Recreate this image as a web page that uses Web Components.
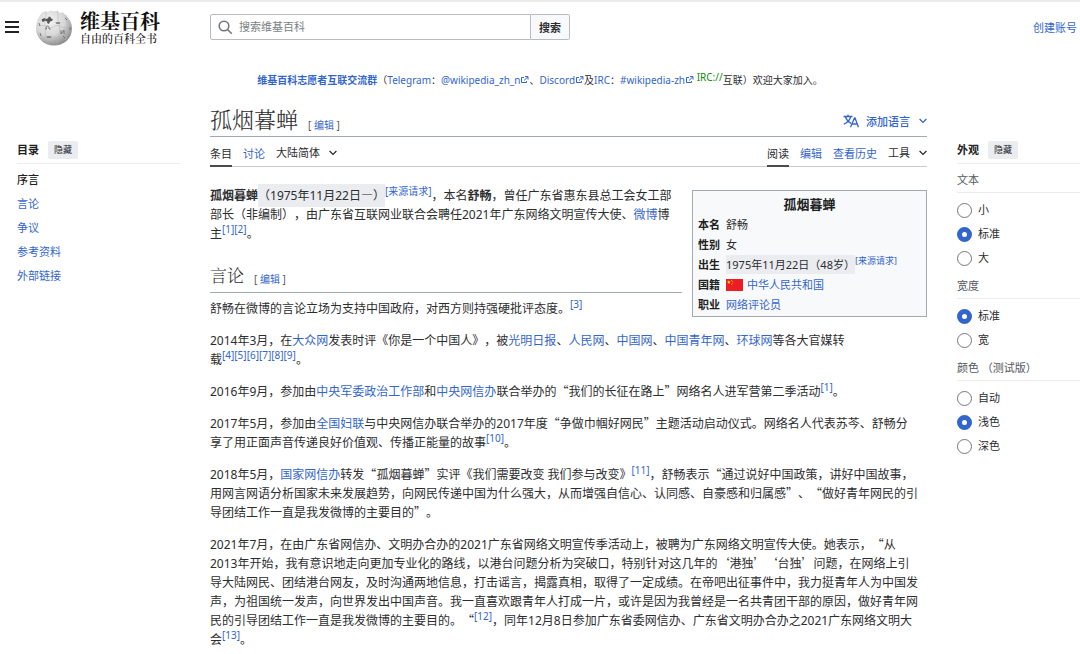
<!DOCTYPE html>
<html lang="zh-CN">
<head>
<meta charset="utf-8">
<meta name="viewport" content="width=device-width">
<title>孤烟暮蝉 - 维基百科</title>
<style>
html{background:#fff}
body{margin:0;border-top:2px solid #ebebeb;color:#2c2d2f;font:12px/19px "Noto Sans","Noto Sans CJK SC",sans-serif;text-spacing-trim:space-all;text-autospace:no-autospace;overflow-x:hidden}
</style>
</head>
<body>
<wiki-page>
  <wiki-header slot="header"></wiki-header>
  <site-notice slot="notice"></site-notice>
  <side-toc slot="left"></side-toc>
  <wiki-article></wiki-article>
  <appearance-panel slot="right">
    <radio-group heading="文本" options="小,标准,大" selected="标准"></radio-group>
    <radio-group heading="宽度" options="标准,宽" selected="标准"></radio-group>
    <radio-group heading="颜色 （测试版）" options="自动,浅色,深色" selected="浅色"></radio-group>
  </appearance-panel>
</wiki-page>
<script>
const base = `
*{box-sizing:border-box}
a{color:#3366cc;text-decoration:none}
button,input{font-family:inherit;color:inherit}
`;
function define(name, html) {
  customElements.define(name, class extends HTMLElement {
    constructor() {
      super();
      const t = document.createElement('template');
      t.innerHTML = html;
      const root = this.attachShadow({mode: 'open'});
      root.append(t.content.cloneNode(true));
    }
  });
}

define('wiki-page', `<style>${base}
:host{display:block}
.cols{display:grid;grid-template-columns:180px minmax(0,1fr) 123px;column-gap:30px}
.cols>*{min-width:0}
.side{padding-top:37px}
</style>
<slot name="header"></slot>
<slot name="notice"></slot>
<div class="cols">
  <div class="side"><slot name="left"></slot></div>
  <main><slot></slot></main>
  <div class="side"><slot name="right"></slot></div>
</div>`);

define('wiki-globe', `<style>:host{display:block;width:38px;height:37px}svg{display:block}</style>
<svg width="38" height="37" viewBox="0 0 38 37" aria-hidden="true">
  <defs><radialGradient id="g" cx=".38" cy=".3" r=".75"><stop offset="0" stop-color="#f4f4f4"/><stop offset=".55" stop-color="#d6d6d6"/><stop offset="1" stop-color="#858585"/></radialGradient></defs>
  <path d="M7 3.5l3.500-1.500 2.500 1 2-1.500 4 .8 3.500-.6 2 2 3.500-.2 3 3c3.800 3.500 6 8 6 13 0 10-8 17-18 17S1 29 1 19.500C1 13 3 8 7 3.500z" fill="url(#g)"/>
  <path d="M6.500 10.500l3-1.500 1.500 1 2-.8 1-1.700 1.500.5.500 1.500 2 .5-1 2-2 .5-1 2.500-2-1 .5-1.500-2.500-.5-2.500 1z" fill="#555"/>
  <g fill="none" stroke="#b4b4b4" stroke-width=".5"><path d="M2 16c3 2 5-1 8 1s5 3 8 1 6-2 9 0 6 0 10-1M6 30c3-3 5-1 8-2s6 2 9 0 6-1 9 1M11 3c1 5-2 8-1 13s-1 9 3 17M22 2c2 5 0 8 2 14s-1 10-2 20M32 6c-2 4 0 7 1 11s-1 9-3 14"/></g>
  <g fill="none" stroke="#666" stroke-width=".8"><path d="M10 20h1.500c-2-4 4-4 2.500 0h1.500M21 13l1 2 1-2 1 2 1-2M12 27l1 2 1-2 1 2 1-2M26 21v4l3-4v4M30 9l2 2M30 29l-2-2M4 14l1 3M5 24l1 3M35 18v3"/></g>
</svg>`);

define('wiki-header', `<style>${base}
:host{display:block;height:54px}
header{display:grid;grid-template-columns:210px minmax(0,360px) 1fr;align-items:center;height:50px}
.brand{display:flex;align-items:center;padding-left:5px}
.menu{border:0;background:none;padding:0;width:14px;height:16px;display:block}
.menu svg{display:block}
.logo{display:flex;align-items:center;margin-left:16px;gap:7px;color:#111}
.words{display:flex;flex-direction:column;font-family:"Noto Serif CJK SC","Noto Sans CJK SC",serif}
.name{font-size:20px;line-height:22px;font-weight:700}
.tag{font-size:11px;line-height:12px;font-weight:500}
form{display:flex;height:26px}
label{flex:1;display:flex;align-items:center;border:1px solid #b8bbc0;border-radius:2px 0 0 2px;padding-left:7px;gap:6px}
label svg{flex:none}
input{flex:1;min-width:0;border:0;padding:0;outline:0;background:none;font-size:11px;line-height:16px}
input::placeholder{color:#7c7f84;opacity:1}
form button{width:39px;border:1px solid #b8bbc0;border-left:0;border-radius:0 2px 2px 0;background:#f8f9fa;font-size:11px;font-weight:700;padding:0}
.acct{justify-self:end;padding-right:3px;font-size:11px}
</style>
<header>
  <div class="brand">
    <button class="menu" aria-label="主菜单"><svg width="14" height="16" viewBox="0 0 14 16"><path d="M0 3h14M0 8h14M0 13h14" stroke="#222" stroke-width="1.900"/></svg></button>
    <a class="logo" href="#"><wiki-globe></wiki-globe><span class="words"><span class="name">维基百科</span><span class="tag">自由的百科全书</span></span></a>
  </div>
  <form role="search">
    <label><svg width="15" height="15" viewBox="0 0 15 15" fill="none" stroke="#72777d" stroke-width="1.600" role="img" aria-label="搜索"><circle cx="6" cy="6" r="4.800"/><path d="M9.500 9.500l4.300 4.300"/></svg><input type="search" placeholder="搜索维基百科" aria-label="搜索维基百科"></label><button type="button">搜索</button>
  </form>
  <a class="acct" href="#">创建账号</a>
</header>`);

define('ext-icon', `<style>:host{display:inline-block;width:9px;height:8px}svg{display:block}</style>
<svg width="9" height="8" viewBox="0 0 9 8" fill="none" stroke="#3366cc" stroke-width="1"><path d="M4 1.500H1.500v5h5V5M5 .6h3v3M8 .6L4 4.500"/></svg>`);

define('site-notice', `<style>${base}
:host{display:block;font-size:10px;line-height:16px;text-align:center;padding:16px 0 0;height:30px;white-space:nowrap}
b a{font-weight:700}
.irc{color:#118a11;position:relative;top:-3px}
</style>
<b><a href="#">维基百科志愿者互联交流群</a></b>（<a href="#">Telegram</a>：<a href="#">@wikipedia_zh_n<ext-icon></ext-icon></a>、<a href="#">Discord<ext-icon></ext-icon></a>及<a href="#">IRC</a>：<a href="#">#wikipedia-zh<ext-icon></ext-icon></a> <span class="irc">IRC://</span>互联）欢迎大家加入。`);

define('panel-head', `<style>${base}
:host{display:flex;align-items:center;gap:9px;height:25px;border-bottom:1px solid #eaecf0;padding-bottom:3px;color:#202122}
b{font-size:11px;line-height:18px}
button{font-size:9px;line-height:18px;height:18px;width:30px;padding:0;border:0;border-radius:2px;background:#eaecf0}
</style><b><slot></slot></b><button>隐藏</button>`);

define('side-toc', `<style>${base}
:host{display:block;padding-left:17px;font-size:11px}
ul{list-style:none;margin:0;padding:4px 0 0}
li{height:24px;line-height:24px}
.on{color:#202122;font-weight:500}
</style>
<nav><panel-head>目录</panel-head>
<ul><li><a class="on" href="#">序言</a></li><li><a href="#">言论</a></li><li><a href="#">争议</a></li><li><a href="#">参考资料</a></li><li><a href="#">外部链接</a></li></ul></nav>`);

define('appearance-panel', `<style>${base}
:host{display:block}
.groups{display:flex;flex-direction:column;gap:4px;padding-top:4px}
</style><panel-head>外观</panel-head><div class="groups"><slot></slot></div>`);

customElements.define('radio-group', class extends HTMLElement {
  connectedCallback() {
    if (this.shadowRoot) return;
    const root = this.attachShadow({mode: 'open'});
    const sel = this.getAttribute('selected');
    root.innerHTML = `<style>${base}
    :host{display:block;font-size:11px}
    fieldset{border:0;margin:0;padding:0;min-width:0}
    legend{display:block;width:100%;padding:0;height:25px;line-height:24px;border-bottom:1px solid #eaecf0;color:#54595d;margin-bottom:5px}
    label{display:flex;align-items:center;gap:6px;height:24px;line-height:24px}
    input{appearance:none;width:15px;height:15px;margin:0;border:1px solid #72777d;border-radius:50%;background:#fff}
    input:checked{border:5px solid #3366cc}
    </style><fieldset><legend>${this.getAttribute('heading')}</legend>${this.getAttribute('options').split(',').map(o =>
      `<label><input type="radio" name="opt"${o === sel ? ' checked' : ''}>${o}</label>`).join('')}</fieldset>`;
  }
});

define('chevron-icon', `<style>:host{display:inline-block;width:8px;height:6px}svg{display:block}</style>
<svg width="8" height="6" viewBox="0 0 8 6" fill="none" stroke="currentColor" stroke-width="1.300"><path d="M.6 1L4 4.400 7.400 1"/></svg>`);

define('edit-link', `<style>${base}:host{display:inline-block;font:10px/14px "Noto Sans","Noto Sans CJK SC",sans-serif;color:#54595d;white-space:pre}</style>[ <a href="#">编辑</a> ]`);

define('page-tabs', `<style>${base}
:host{display:flex;justify-content:space-between;height:30px;border-bottom:1px solid #c8ccd1;font-size:11px;line-height:33px}
nav{display:flex;gap:11px}
a,button{height:30px;line-height:33px;display:block}
a.on{color:inherit;border-bottom:2px solid #4a4b4d}
button{display:flex;align-items:center;gap:9px;border:0;background:none;padding:0;font-size:11px}
chevron-icon{margin-top:2px}
</style>
<nav><a class="on" href="#">条目</a><a href="#">讨论</a><button>大陆简体<chevron-icon></chevron-icon></button></nav>
<nav><a class="on" href="#">阅读</a><a href="#">编辑</a><a href="#">查看历史</a><button>工具<chevron-icon></chevron-icon></button></nav>`);

define('cn-flag', `<style>:host{display:inline-block;width:17px;height:12px;vertical-align:-2px;margin-right:4px}svg{display:block}</style>
<svg width="17" height="12" viewBox="0 0 30 20" preserveAspectRatio="none"><path fill="#ee1c25" d="M0 0h30v20H0z"/><g fill="#ff0"><path d="M5 2l.9 2.100 2.100.2-1.600 1.500.5 2.200L5 6.800 3.100 8l.5-2.200L2 4.300l2.100-.2z"/><circle cx="10" cy="2" r=".8"/><circle cx="12" cy="4" r=".8"/><circle cx="12" cy="7" r=".8"/><circle cx="10" cy="9" r=".8"/></g></svg>`);

define('info-box', `<style>${base}
:host{display:block;float:right;width:235px;margin:4px 0 14px 10px;border:1px solid #a2a9b1;background:#f8f9fa;padding:1px 2px}
table{border-collapse:collapse;width:100%;font-size:11px;line-height:20px}
caption{font-size:13px;font-weight:700;line-height:22px;padding-top:1px;color:#202122}
th{width:29px;text-align:left;padding:0 0 0 3px;color:#202122}
td{padding:0 0 0 2px}
th,td{height:20px}
.hl{background:#eaecf0;padding:2px 0}
sup{font-size:9px;line-height:0}
</style>
<table><caption>孤烟暮蝉</caption>
<tr><th scope="row">本名</th><td>舒畅</td></tr>
<tr><th scope="row">性别</th><td>女</td></tr>
<tr><th scope="row">出生</th><td><span class="hl">1975年11月22日（48岁）</span><sup><a href="#">[来源请求]</a></sup></td></tr>
<tr><th scope="row">国籍</th><td><cn-flag></cn-flag><a href="#">中华人民共和国</a></td></tr>
<tr><th scope="row">职业</th><td><a href="#">网络评论员</a></td></tr></table>`);

/* .q: quotation marks take the full-width forms of the CJK face */
define('wiki-article', `<style>${base}
:host{display:block}
.title{display:flex;align-items:center;justify-content:space-between;height:35px;padding-top:4px;border-bottom:1px solid #a2a9b1}
h1,h2{margin:0;font-family:"Liberation Serif","Noto Serif CJK SC","Noto Sans CJK SC",serif;font-weight:300;display:flex;align-items:center;gap:10px}
h1{font-size:22px;line-height:30px}
h1 edit-link{margin-top:8px}
h2 edit-link{margin-top:4px}
h2{font-size:17px;line-height:26px;height:30px;padding-bottom:2px;border-bottom:1px solid #a2a9b1;margin-top:20px;overflow:hidden}
.lang{border:0;background:none;padding:0;display:flex;align-items:center;gap:7px;font-size:11px;font-weight:500;color:#3366cc}
.lang chevron-icon{margin-left:2px}
.body{padding-top:19px}
p{margin:0 0 13px;white-space:nowrap}
h2+p{margin-top:6px}
sup{font-size:10px;line-height:0}
.hl{background:#eaecf0;padding:3px 0}
.q{font-family:"Noto Sans CJK SC",sans-serif;font-style:normal;line-height:0}
</style>
<article>
<div class="title"><h1>孤烟暮蝉<edit-link></edit-link></h1>
<button class="lang"><svg width="16" height="14" viewBox="0 0 16 14" fill="none" stroke="currentColor" stroke-width="1.300" aria-hidden="true"><path d="M.5 2.500h9M5 .5v2M2.300 2.800C3.500 6 5.500 8.200 8.200 9.500M7.800 2.800C6.500 6.500 4 9 .8 10.200M7.500 13.300L11.500 4h.5l3.500 9.300M9 10h5.500"/></svg>添加语言<chevron-icon></chevron-icon></button></div>
<page-tabs></page-tabs>
<div class="body">
<info-box></info-box>
<p><b>孤烟暮蝉</b><span class="hl">（1975年11月22日<i class="q">—</i>）</span><sup><a href="#">[来源请求]</a></sup>，本名<b>舒畅</b>，曾任广东省惠东县总工会女工部<br>部长（非编制），由广东省互联网业联合会聘任2021年广东网络文明宣传大使、<a href="#">微博</a>博<br>主<sup><a href="#">[1]</a><a href="#">[2]</a></sup>。</p>
<h2>言论<edit-link></edit-link></h2>
<p>舒畅在微博的言论立场为支持中国政府，对西方则持强硬批评态度。<sup><a href="#">[3]</a></sup></p>
<p>2014年3月，在<a href="#">大众网</a>发表时评《你是一个中国人》，被<a href="#">光明日报</a>、<a href="#">人民网</a>、<a href="#">中国网</a>、<a href="#">中国青年网</a>、<a href="#">环球网</a>等各大官媒转<br>载<sup><a href="#">[4]</a><a href="#">[5]</a><a href="#">[6]</a><a href="#">[7]</a><a href="#">[8]</a><a href="#">[9]</a></sup>。</p>
<p>2016年9月，参加由<a href="#">中央军委政治工作部</a>和<a href="#">中央网信办</a>联合举办的<i class="q">“</i>我们的长征在路上<i class="q">”</i>网络名人进军营第二季活动<sup><a href="#">[1]</a></sup>。</p>
<p>2017年5月，参加由<a href="#">全国妇联</a>与中央网信办联合举办的2017年度<i class="q">“</i>争做巾帼好网民<i class="q">”</i>主题活动启动仪式。网络名人代表苏芩、舒畅分<br>享了用正面声音传递良好价值观、传播正能量的故事<sup><a href="#">[10]</a></sup>。</p>
<p>2018年5月，<a href="#">国家网信办</a>转发<i class="q">“</i>孤烟暮蝉<i class="q">”</i>实评《我们需要改变 我们参与改变》<sup><a href="#">[11]</a></sup>，舒畅表示<i class="q">“</i>通过说好中国政策，讲好中国故事，<br>用网言网语分析国家未来发展趋势，向网民传递中国为什么强大，从而增强自信心、认同感、自豪感和归属感<i class="q">”</i>、<i class="q">“</i>做好青年网民的引<br>导团结工作一直是我发微博的主要目的<i class="q">”</i>。</p>
<p>2021年7月，在由广东省网信办、文明办合办的2021广东省网络文明宣传季活动上，被聘为广东网络文明宣传大使。她表示，<i class="q">“</i>从<br>2013年开始，我有意识地走向更加专业化的路线，以港台问题分析为突破口，特别针对这几年的<i class="q">‘</i>港独<i class="q">’</i><i class="q">‘</i>台独<i class="q">’</i>问题，在网络上引<br>导大陆网民、团结港台网友，及时沟通两地信息，打击谣言，揭露真相，取得了一定成绩。在帝吧出征事件中，我力挺青年人为中国发<br>声，为祖国统一发声，向世界发出中国声音。我一直喜欢跟青年人打成一片，或许是因为我曾经是一名共青团干部的原因，做好青年网<br>民的引导团结工作一直是我发微博的主要目的。<i class="q">“</i><sup><a href="#">[12]</a></sup>，同年12月8日参加广东省委网信办、广东省文明办合办之2021广东网络文明大<br>会<sup><a href="#">[13]</a></sup>。</p>
</div>
</article>`);
</script>
</body>
</html>
